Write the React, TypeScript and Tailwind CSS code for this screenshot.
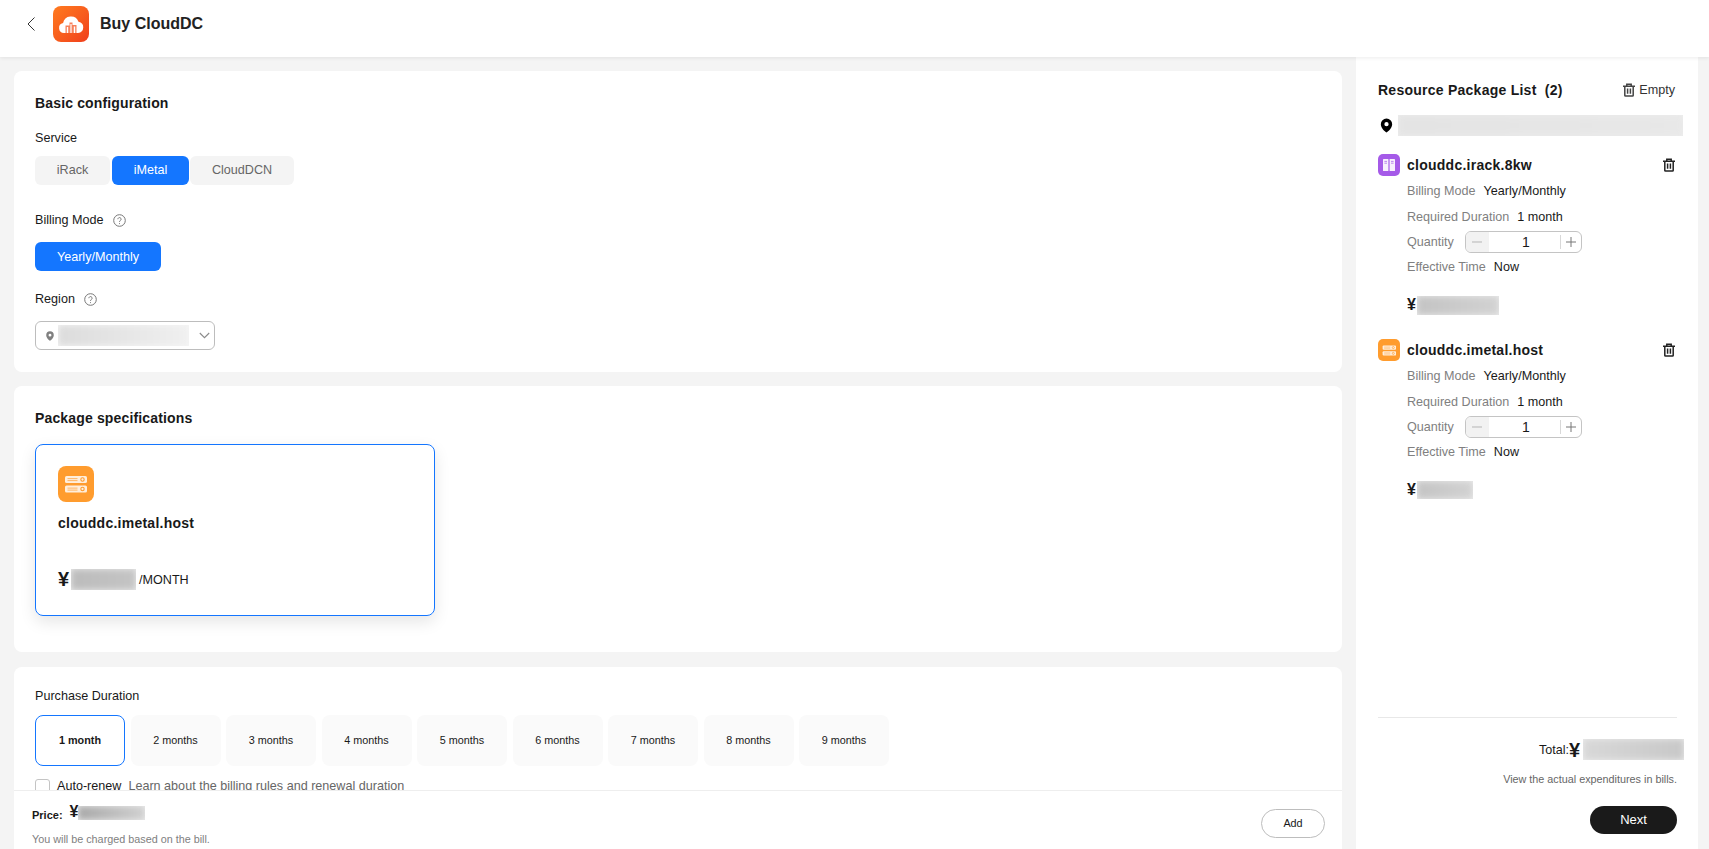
import { ReactNode } from "react";

/* ── Icons ───────────────────────────────────────────────── */
function CloudLogo() {
  return (
    <div className="w-9 h-9 rounded-lg bg-gradient-to-br from-[#ff7a1f] to-[#f03d1c] flex items-center justify-center shrink-0">
      <svg width="26" height="22" viewBox="0 0 26 22">
        <path
          d="M6 20a5 5 0 0 1-.9-9.9 8 8 0 0 1 15.4-1.4A5.7 5.7 0 0 1 20 20z"
          fill="#fff"
        />
        <path d="M7.5 20v-7.5h4V20zM11.5 20V9.5h3V20zM14.5 20v-8h4v8z" fill="#f7805a" />
        <path d="M8.8 20v-6h1.4v6zM15.8 20v-6.5h1.4V20zM12.4 20v-9h1.2v9z" fill="#fff" />
      </svg>
    </div>
  );
}

function ServerIcon({ size, rounded }: { size: number; rounded: string }) {
  return (
    <div
      className={`${rounded} bg-[#ff9c2e] flex items-center justify-center shrink-0`}
      style={{ width: size, height: size }}
    >
      <svg width={(size * 2) / 3} height={(size * 2) / 3} viewBox="0 0 24 24">
        <rect x="1" y="4" width="22" height="7" rx="1.6" fill="#ffeedb" />
        <rect x="1" y="13.5" width="22" height="7" rx="1.6" fill="#ffeedb" />
        <path d="M3.5 6.6h10M3.5 8.6h10M3.5 16.1h10M3.5 18.1h10" stroke="#ffb566" strokeWidth="1" />
        <circle cx="18.5" cy="7.5" r="1.7" fill="none" stroke="#ff9c2e" strokeWidth="1.1" />
        <circle cx="18.5" cy="17" r="1.7" fill="none" stroke="#ff9c2e" strokeWidth="1.1" />
      </svg>
    </div>
  );
}

function RackIcon() {
  return (
    <div className="w-[22px] h-[22px] rounded-[5px] bg-[#a55ae8] flex items-center justify-center shrink-0">
      <svg width="14" height="14" viewBox="0 0 14 14">
        <rect x="1" y="1" width="5.4" height="12" rx="0.6" fill="#f7effd" />
        <rect x="7.6" y="1" width="5.4" height="12" rx="0.6" fill="#f7effd" />
        <path d="M2.4 3.4h2.6M2.4 5.2h2.6M9 3.4h2.6M9 5.2h2.6" stroke="#b57aec" strokeWidth="0.9" />
      </svg>
    </div>
  );
}

function HelpIcon() {
  return (
    <svg width="13" height="13" viewBox="0 0 13 13" fill="none" stroke="#777" strokeWidth="1">
      <circle cx="6.5" cy="6.5" r="5.8" />
      <path d="M4.9 5.2a1.6 1.6 0 1 1 2.5 1.3c-.6.4-.9.7-.9 1.4" />
      <path d="M6.5 9.2v.9" />
    </svg>
  );
}

function TrashIcon({ color = "#191919" }: { color?: string }) {
  return (
    <svg width="14" height="14" viewBox="0 0 14 14" fill="none" stroke={color} strokeWidth="1.5">
      <path d="M1 3.2h12M4.8 3.2V1.2h4.4v2M2.8 3.2v9.2c0 .4.3.7.7.7h7c.4 0 .7-.3.7-.7V3.2" />
      <path d="M5.6 5.4v5.4M8.4 5.4v5.4" />
    </svg>
  );
}

function PinIcon({ size, color }: { size: number; color: string }) {
  return (
    <svg width={size} height={size} viewBox="0 0 14 14">
      <path
        fillRule="evenodd"
        d="M7 0.5a5.3 5.3 0 0 0-5.3 5.3c0 3.4 3.7 6.8 5.3 7.8 1.6-1 5.3-4.4 5.3-7.8A5.3 5.3 0 0 0 7 .5zm0 3.3a2 2 0 1 1 0 4 2 2 0 0 1 0-4z"
        fill={color}
      />
    </svg>
  );
}

/* ── Masked value ────────────────────────────────────────── */
function Blurred({ className, inner }: { className: string; inner: string }) {
  return (
    <div className={`overflow-hidden shrink-0 bg-[#ededed] ${className}`}>
      <div className={`h-full blur-[3px] bg-gradient-to-r ${inner}`} />
    </div>
  );
}

function Row({ label, children }: { label: string; children: ReactNode }) {
  return (
    <div className="h-[25.3px] flex items-center gap-2 text-[12.6px] text-[#191919]">
      <span className="text-[#808080]">{label}</span>
      {children}
    </div>
  );
}

const ITEMS = [
  { name: "clouddc.irack.8kw", icon: <RackIcon />, blur: "w-[82px] h-[19px]" },
  { name: "clouddc.imetal.host", icon: <ServerIcon size={22} rounded="rounded-[5px]" />, blur: "w-[56px] h-[18px]" },
];

const DURATIONS = ["1 month", "2 months", "3 months", "4 months", "5 months", "6 months", "7 months", "8 months", "9 months"];

/* ── Cart item ───────────────────────────────────────────── */
function PackageItem({ item }: { item: (typeof ITEMS)[number] }) {
  return (
    <div>
      <div className="flex items-center h-[22px] gap-[7px]">
        {item.icon}
        <h3 className="text-sm font-bold text-[#191919] tracking-[0.25px] flex-1">{item.name}</h3>
        <span className="mr-[1px]"><TrashIcon color="#222" /></span>
      </div>
      <div className="pl-[29px] pt-[3px]">
        <Row label="Billing Mode">Yearly/Monthly</Row>
        <Row label="Required Duration">1 month</Row>
        <Row label="Quantity">
          <div className="ml-[3px] w-[117px] h-[22px] border border-[#c4c4c4] rounded-md flex items-center overflow-hidden">
            <div className="w-[23px] h-full bg-[#f2f2f2] flex items-center justify-center text-[#b5b5b5]">
              <svg width="10" height="10" viewBox="0 0 10 10" stroke="currentColor"><path d="M0 5h10" /></svg>
            </div>
            <span className="flex-1 text-center pl-[3px] text-sm">1</span>
            <div className="w-[21px] h-[14px] border-l border-[#d8d8d8] flex items-center justify-center text-[#777]">
              <svg width="10" height="10" viewBox="0 0 10 10" stroke="currentColor"><path d="M0 5h10M5 0v10" /></svg>
            </div>
          </div>
        </Row>
        <Row label="Effective Time">Now</Row>
        <div className="flex items-center mt-[13px]">
          <span className="text-base font-bold text-[#191919] w-[10px]">¥</span>
          <Blurred className={item.blur} inner="from-[#c4c4c4] to-[#d2d2d2]" />
        </div>
      </div>
    </div>
  );
}

/* ── Page ────────────────────────────────────────────────── */
export default function App() {
  return (
    <div className="h-screen flex flex-col bg-[#f4f4f4] overflow-hidden font-['Liberation_Sans',Arial,sans-serif] text-[#191919]">
      {/* ── Header ── */}
      <header className="h-[57px] shrink-0 bg-white flex items-center pl-[27px] shadow-[0_1px_4px_rgba(0,0,0,0.08)] z-10">
        <div className="flex items-center pb-[9px]">
          <svg className="mr-[18px]" width="8" height="14" viewBox="0 0 8 14" fill="none" stroke="#333" strokeWidth="1">
            <path d="M7.5.5 1 7l6.5 6.5" />
          </svg>
          <CloudLogo />
          <h1 className="text-base font-bold text-[#222] ml-[11px]">Buy CloudDC</h1>
        </div>
      </header>

      <div className="flex-1 min-h-0 flex pl-[14px]">
        {/* ── Left column ── */}
        <div className="w-[1328px] flex flex-col min-h-0">
          <main className="flex-1 min-h-0 overflow-hidden pt-[14px] flex flex-col gap-[14px]">
            {/* Basic configuration */}
            <section className="h-[301px] shrink-0 bg-white rounded-lg pl-[21px] pt-[24px]">
              <h2 className="text-sm font-bold leading-4 tracking-[0.15px]">Basic configuration</h2>
              <p className="text-[12.6px] leading-4 mt-[19px]">Service</p>
              <div className="flex mt-[10px] text-[12.6px] h-[29px]">
                <button className="w-[75px] rounded-md bg-[#f4f4f4] text-[#666]">iRack</button>
                <button className="w-[77px] ml-[2px] rounded-md bg-[#1476ff] text-white font-medium">iMetal</button>
                <button className="w-[104px] ml-[1px] rounded-md bg-[#f4f4f4] text-[#666]">CloudDCN</button>
              </div>
              <div className="flex items-center gap-[9px] mt-[27px] text-[12.6px] leading-4">
                Billing Mode <HelpIcon />
              </div>
              <button className="mt-[14px] w-[126px] h-[29px] rounded-md bg-[#1476ff] text-white text-[12.6px] pt-[1px]">Yearly/Monthly</button>
              <div className="flex items-center gap-[9px] mt-[20px] text-[12.6px] leading-4">
                Region <HelpIcon />
              </div>
              <div className="mt-[14px] w-[180px] h-[29px] border border-[#bdbdbd] rounded-md flex items-center pl-[9px] gap-[3px]">
                <PinIcon size={10} color="#808080" />
                <Blurred className="w-[131px] h-[21px] bg-[#f6f6f6]" inner="from-[#dcdcdc] to-[#f0f0f0]" />
                <svg className="ml-[7px]" width="11" height="7" viewBox="0 0 11 7" fill="none" stroke="#8a8a8a" strokeWidth="1.1">
                  <path d="m.8 1 4.7 4.7L10.2 1" />
                </svg>
              </div>
            </section>

            {/* Package specifications */}
            <section className="h-[266px] shrink-0 bg-white rounded-lg pl-[21px] pt-[24px]">
              <h2 className="text-sm font-bold leading-4 tracking-[0.15px]">Package specifications</h2>
              <div className="mt-[18px] w-[400px] h-[172px] border border-[#1476ff] rounded-lg pl-[22px] pt-[21px] shadow-[0_6px_16px_rgba(0,0,0,0.1)]">
                <ServerIcon size={36} rounded="rounded-lg" />
                <p className="mt-[13px] text-sm font-bold leading-4 tracking-[0.25px]">clouddc.imetal.host</p>
                <div className="flex items-center mt-[38px]">
                  <span className="text-xl font-bold w-[13px] leading-[21px]">¥</span>
                  <Blurred className="w-[65px] h-[21px]" inner="from-[#bcbcbc] to-[#c4c4c4]" />
                  <span className="text-[12.6px] ml-[3px] pt-[1px]">/MONTH</span>
                </div>
              </div>
            </section>

            {/* Purchase duration */}
            <section className="shrink-0 bg-white rounded-t-lg pl-[21px] pt-[21px] pb-[40px] mt-[1px]">
              <p className="text-[12.6px] leading-4">Purchase Duration</p>
              <div className="flex gap-[5.5px] mt-[11px]">
                {DURATIONS.map((d, i) => (
                  <button
                    key={d}
                    className={`w-[90px] h-[51px] rounded-lg text-[10.8px] ${
                      i === 0 ? "border border-[#1476ff] font-bold" : "bg-[#fafafa]"
                    }`}
                  >
                    {d}
                  </button>
                ))}
              </div>
              <div className="flex items-center mt-[12px] text-[12.6px] leading-4">
                <span className="w-[15px] h-[15px] rounded-[3px] border border-[#c4c4c4] mr-[7px]" />
                <span>Auto-renew</span>
                <span className="ml-[7px] text-[#666]">Learn about the billing rules and renewal duration</span>
              </div>
            </section>
          </main>

          {/* ── Bottom bar ── */}
          <footer className="h-[59px] shrink-0 bg-white border-t border-[#eeeeee] flex items-start justify-between pl-[18px] pr-[17px] z-10">
            <div className="pt-[12px]">
              <div className="flex items-center h-[22px]">
                <span className="text-[11px] font-bold pt-[2px]">Price:</span>
                <span className="text-base font-bold ml-[7px] w-[8px] pb-[4px]">¥</span>
                <Blurred className="w-[67px] h-[14px] mb-[3px]" inner="from-[#a8a8a8] to-[#d0d0d0]" />
              </div>
              <p className="text-[10.8px] text-[#808080] mt-[6px] leading-4">You will be charged based on the bill.</p>
            </div>
            <button className="w-[64px] h-[29px] rounded-full border border-[#bdbdbd] text-[10.8px] mt-[18px]">Add</button>
          </footer>
        </div>

        {/* ── Resource package list ── */}
        <aside className="w-[342px] ml-[14px] bg-white pl-[22px] pr-[21px] flex flex-col">
          <div className="flex items-center justify-between pt-[25px] h-[41px]">
            <h2 className="text-sm font-bold tracking-[0.25px] whitespace-pre">Resource Package List  (2)</h2>
            <span className="flex items-center gap-[3px] text-[12.6px] text-[#333] mr-[2px]">
              <TrashIcon color="#444" /> Empty
            </span>
          </div>
          <div className="flex items-center mt-[17px] mr-[-6px] h-[21px]">
            <span className="ml-[1px] mr-[4px]"><PinIcon size={15} color="#000" /></span>
            <Blurred className="w-[285px] h-[21px]" inner="from-[#e4e4e4] to-[#e8e8e8]" />
          </div>
          <div className="flex flex-col gap-[22px] mt-[18px]">
            {ITEMS.map((item) => (
              <PackageItem key={item.name} item={item} />
            ))}
          </div>
          <div className="mt-auto border-t border-[#e8e8e8] pb-[15px]">
            <div className="flex items-center justify-end mt-[21px] mr-[-7px] h-[21px]">
              <span className="text-[12.6px] pt-[2px]">Total:</span>
              <span className="text-xl font-bold w-[14px] leading-none">¥</span>
              <Blurred className="w-[101px] h-[21px]" inner="from-[#d8d8d8] to-[#c8c8c8]" />
            </div>
            <p className="text-[10.8px] text-[#666] text-right mt-[11px] leading-4">View the actual expenditures in bills.</p>
            <div className="flex justify-end mt-[19px]">
              <button className="w-[87px] h-[28px] rounded-full bg-[#1a1a1a] text-white text-[13px] font-medium">Next</button>
            </div>
          </div>
        </aside>
      </div>
    </div>
  );
}
